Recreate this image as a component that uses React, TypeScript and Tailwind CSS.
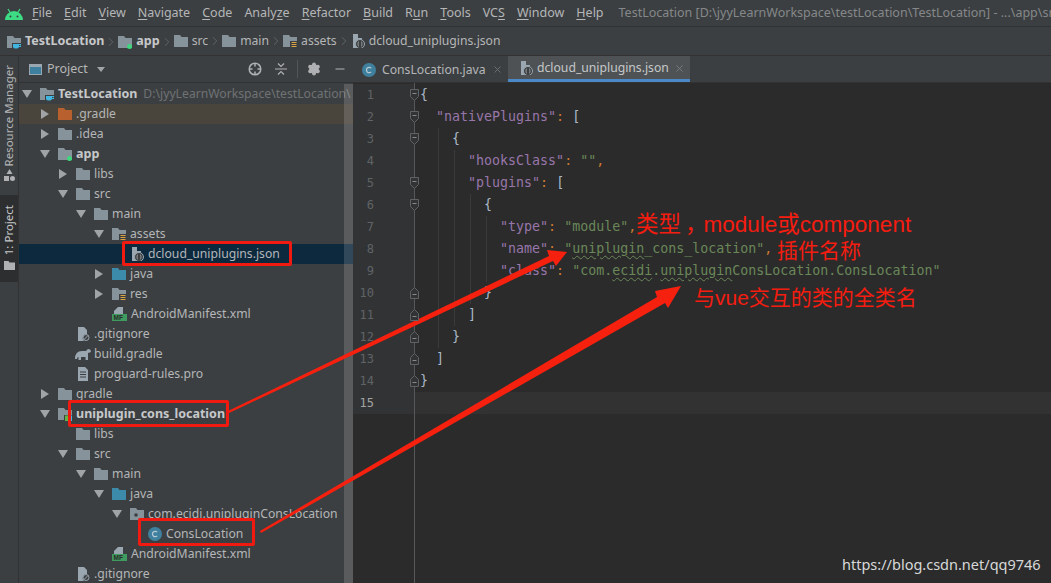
import { ChevronRight, Minus, Settings, X } from "lucide-react";
import type { ReactNode } from "react";

const Folder = ({ color = "#87939a", mark }: { color?: string; mark?: ReactNode }) => (
  <svg width="14" height="14" viewBox="0 0 14 14" className="shrink-0">
    <path d="M0 1h6l1.5 2H14v10H0z" fill={color} />
    {mark}
  </svg>
);

const greenDot = <circle cx="11.5" cy="11.5" r="2.5" fill="#3fd67c" />;
const resLines = (
  <g>
    <rect x="7" y="7" width="7" height="7" fill="#3c3f41" />
    <path d="M8.5 8.5h5M8.5 10.5h5M8.5 12.5h5" stroke="#d9a343" strokeWidth="1" />
  </g>
);
const cup = (
  <g>
    <rect x="5" y="8" width="9" height="6" fill="#3c3f41" />
    <path d="M6 9h6v2.5a2 2 0 0 1-2 2H8a2 2 0 0 1-2-2z" fill="#40b6e0" />
    <path d="M12 9.5h2v2h-2" stroke="#40b6e0" fill="none" />
  </g>
);

const JsonIcon = () => (
  <svg width="14" height="14" viewBox="0 0 14 14" className="shrink-0">
    <path d="M2 0h5v4h4v3H7v7H2z" fill="#9aa7b0" />
    <circle cx="9" cy="10" r="4.5" fill="#3c3f41" stroke="#9aa7b0" strokeWidth="1" />
    <path d="M8 7.5q-1 .2-1 2.5t1 2.5M10 7.5q1 .2 1 2.5t-1 2.5" stroke="#afb1b3" fill="none" strokeWidth=".8" />
  </svg>
);

const ClassIcon = () => (
  <svg width="14" height="14" viewBox="0 0 14 14" className="shrink-0">
    <circle cx="7" cy="7" r="7" fill="#40809f" />
    <path d="M9.2 5.2a2.7 2.7 0 1 0 0 3.6" stroke="#b5c9d4" fill="none" strokeWidth="1.2" />
  </svg>
);

const ManifestIcon = () => (
  <svg width="15" height="14" viewBox="0 0 15 14" className="shrink-0">
    <path d="M6 0h5v7H2V4z" fill="#9aa7b0" />
    <rect x="0" y="7" width="15" height="7" fill="#3f9b5f" />
    <text x="1.5" y="13" fontSize="6.5" fontWeight="700" fill="#2b2b2b" fontFamily="Liberation Sans">MF</text>
  </svg>
);

const GitignoreIcon = () => (
  <svg width="14" height="14" viewBox="0 0 14 14" className="shrink-0">
    <path d="M2 0h6l3 3v4a4 4 0 0 0-3 7H2z" fill="#9aa7b0" />
    <circle cx="10" cy="10.5" r="3" fill="none" stroke="#9aa7b0" />
    <path d="M8 12.5l4-4" stroke="#9aa7b0" />
  </svg>
);

const GradleIcon = () => (
  <svg width="16" height="12" viewBox="0 0 16 12" className="-ml-[1px] -mr-[1px] shrink-0">
    <path d="M0 11q0-8 7-8h4q2-3 4-1.500 1 1 1 2.500l-3 1v7h-2.500V9H6v3H3.500V9Q2 9 2 11z" fill="#9aa7b0" />
  </svg>
);

const TextIcon = () => (
  <svg width="14" height="14" viewBox="0 0 14 14" className="shrink-0">
    <path d="M2 0h7l3 3v11H2z" fill="#9aa7b0" />
    <path d="M4 5h6M4 7.500h6M4 10h6" stroke="#3c3f41" />
  </svg>
);

const ModuleIcon = () => (
  <svg width="14" height="14" viewBox="0 0 14 14" className="shrink-0">
    <path d="M0 1h6l1.5 2H14v10H0z" fill="#87939a" />
    <rect x="6" y="8" width="8" height="6" fill="#3c3f41" />
    <rect x="7" y="8.500" width="3" height="5.500" fill="#62b543" />
    <rect x="11" y="8.500" width="3" height="5.500" fill="#40b6e0" />
  </svg>
);

const PackageIcon = () => (
  <svg width="14" height="14" viewBox="0 0 14 14" className="shrink-0">
    <path d="M0 1h6l1.500 2H14v10H0z" fill="#87939a" />
    <circle cx="6" cy="8" r="1.800" fill="#3c3f41" />
  </svg>
);

type Row = {
  level: number;
  arrow?: "open" | "closed";
  icon: ReactNode;
  label: string;
  bold?: boolean;
  rowCls?: string;
  hint?: string;
};

const tree: Row[] = [
  { level: 0, arrow: "open", icon: <Folder mark={cup} />, label: "TestLocation", bold: true, hint: "D:\\jyyLearnWorkspace\\testLocation\\" },
  { level: 1, arrow: "closed", icon: <Folder color="#b8602e" />, label: ".gradle", rowCls: "bg-[#49453c]" },
  { level: 1, arrow: "closed", icon: <Folder />, label: ".idea" },
  { level: 1, arrow: "open", icon: <Folder mark={greenDot} />, label: "app", bold: true },
  { level: 2, arrow: "closed", icon: <Folder />, label: "libs" },
  { level: 2, arrow: "open", icon: <Folder />, label: "src" },
  { level: 3, arrow: "open", icon: <Folder />, label: "main" },
  { level: 4, arrow: "open", icon: <Folder mark={resLines} />, label: "assets" },
  { level: 5, icon: <JsonIcon />, label: "dcloud_uniplugins.json", rowCls: "bg-[#0d293e]" },
  { level: 4, arrow: "closed", icon: <Folder color="#3d8bab" />, label: "java" },
  { level: 4, arrow: "closed", icon: <Folder mark={resLines} />, label: "res" },
  { level: 4, icon: <ManifestIcon />, label: "AndroidManifest.xml" },
  { level: 2, icon: <GitignoreIcon />, label: ".gitignore" },
  { level: 2, icon: <GradleIcon />, label: "build.gradle" },
  { level: 2, icon: <TextIcon />, label: "proguard-rules.pro" },
  { level: 1, arrow: "closed", icon: <Folder />, label: "gradle" },
  { level: 1, arrow: "open", icon: <ModuleIcon />, label: "uniplugin_cons_location", bold: true },
  { level: 2, icon: <Folder />, label: "libs" },
  { level: 2, arrow: "open", icon: <Folder />, label: "src" },
  { level: 3, arrow: "open", icon: <Folder />, label: "main" },
  { level: 4, arrow: "open", icon: <Folder color="#3d8bab" />, label: "java" },
  { level: 5, arrow: "open", icon: <PackageIcon />, label: "com.ecidi.unipluginConsLocation" },
  { level: 6, icon: <ClassIcon />, label: "ConsLocation" },
  { level: 4, icon: <ManifestIcon />, label: "AndroidManifest.xml" },
  { level: 2, icon: <GitignoreIcon />, label: ".gitignore" },
];

const indents = ["pl-[3px]", "pl-[21px]", "pl-[39px]", "pl-[57px]", "pl-[75px]", "pl-[93px]", "pl-[111px]"];

const TreeRow = ({ row }: { row: Row }) => (
  <div className={`flex h-5 shrink-0 items-center overflow-hidden whitespace-nowrap ${indents[row.level]} ${row.rowCls ?? ""}`}>
    <span className="flex w-[18px] shrink-0 items-center justify-start">
      {row.arrow === "open" && <span className="h-0 w-0 border-x-[5px] border-t-[8px] border-x-transparent border-t-[#a0a4a6]" />}
      {row.arrow === "closed" && <span className="ml-[1px] h-0 w-0 border-y-[5px] border-l-[8px] border-y-transparent border-l-[#a0a4a6]" />}
    </span>
    {row.icon}
    <span className={`ml-1 ${row.bold ? "text-[12.5px] font-bold text-[#c6c8ca]" : "text-[#b4b6b8]"}`}>{row.label}</span>
    {row.hint && <span className="ml-[6px] text-[#6f7274]">{row.hint}</span>}
  </div>
);

const menu: [string, string, string][] = [
  ["", "F", "ile"], ["", "E", "dit"], ["", "V", "iew"], ["", "N", "avigate"], ["", "C", "ode"],
  ["Analy", "z", "e"], ["", "R", "efactor"], ["", "B", "uild"], ["R", "u", "n"], ["", "T", "ools"],
  ["VC", "S", ""], ["", "W", "indow"], ["", "H", "elp"],
];

const Crumb = ({ icon, label, bold, last }: { icon: ReactNode; label: string; bold?: boolean; last?: boolean }) => (
  <div className="flex items-center">
    {icon}
    <span className={`ml-1 ${bold ? "text-[12.5px] font-bold text-[#c6c8ca]" : "text-[#b4b6b8]"}`}>{label}</span>
    {!last && <ChevronRight size={14} strokeWidth={1} className="text-[#7b7e80]" />}
  </div>
);

const K = ({ children }: { children: ReactNode }) => <span className="text-[#9876aa]">{children}</span>;
const S = ({ children }: { children: ReactNode }) => <span className="text-[#6a8759]">{children}</span>;
const P = ({ children }: { children: ReactNode }) => <span className="text-[#cc7832]">{children}</span>;
const Typo = ({ children }: { children: ReactNode }) => (
  <span className="underline decoration-[#6a8759] decoration-wavy decoration-1 underline-offset-2">{children}</span>
);

const code: { fold?: "open" | "close"; text: ReactNode }[] = [
  { fold: "open", text: "{" },
  { fold: "open", text: <>{"  "}<K>"nativePlugins"</K><P>:</P> [</> },
  { fold: "open", text: "    {" },
  { text: <>{"      "}<K>"hooksClass"</K><P>:</P> <S>""</S><P>,</P></> },
  { fold: "open", text: <>{"      "}<K>"plugins"</K><P>:</P> [</> },
  { fold: "open", text: "        {" },
  { text: <>{"          "}<K>"type"</K><P>:</P> <S>"module"</S><P>,</P></> },
  { text: <>{"          "}<K>"name"</K><P>:</P> <S>"<Typo>uniplugin</Typo>_cons_location"</S><P>,</P></> },
  { text: <>{"          "}<K>"class"</K><P>:</P> <S>"com.<Typo>ecidi</Typo>.<Typo>uniplugin</Typo>ConsLocation.ConsLocation"</S></> },
  { fold: "close", text: "        }" },
  { fold: "close", text: "      ]" },
  { fold: "close", text: "    }" },
  { fold: "close", text: "  ]" },
  { fold: "close", text: "}" },
  { text: "" },
];

const FoldMark = ({ dir }: { dir: "open" | "close" }) => (
  <svg width="9" height="12" viewBox="0 0 9 12">
    <path d={dir === "open" ? "M.5.5h8v7l-4 4-4-4z" : "M.5 11.500h8v-7l-4-4-4 4z"} fill="#313335" stroke="#5f6366" />
    <path d={dir === "open" ? "M2.500 4.500h4" : "M2.500 7.500h4"} stroke="#85888a" />
  </svg>
);

export default function App() {
  return (
    <div className="relative flex h-[583px] w-[1051px] flex-col overflow-hidden bg-[#3c3f41] font-['Noto_Sans','Liberation_Sans',sans-serif] text-[12.2px] text-[#b4b6b8]">
      {/* Menu bar */}
      <div className="flex h-[27px] shrink-0 items-center whitespace-nowrap border-b border-[#323232] pl-[4px] pt-[1px] text-[12.5px]">
        <svg width="20" height="12" viewBox="0 0 20 12" className="mr-[8px] shrink-0">
          <path d="M1 12a9 9 0 0 1 18 0z" fill="#3ddc84" />
          <path d="M4 1l2.500 4M16 1l-2.500 4" stroke="#3ddc84" strokeWidth="1.200" />
          <circle cx="6.500" cy="8.500" r="1" fill="#3c3f41" />
          <circle cx="13.500" cy="8.500" r="1" fill="#3c3f41" />
        </svg>
        <div className="flex gap-[12px]">
          {menu.map(([a, u, b]) => (
            <span key={a + u + b}>
              {a}
              <span className="underline underline-offset-2">{u}</span>
              {b}
            </span>
          ))}
        </div>
        <span className="ml-[15px] text-[#85888a]">TestLocation [D:\jyyLearnWorkspace\testLocation\TestLocation] - ...\app\src\main\assets\dcloud_uniplugins.json</span>
      </div>

      {/* Breadcrumb */}
      <div className="flex h-[29px] shrink-0 items-center border-b border-[#323232] pl-[7px] pt-[1px]">
        <Crumb icon={<Folder mark={cup} />} label="TestLocation" bold />
        <Crumb icon={<Folder mark={greenDot} />} label="app" bold />
        <Crumb icon={<Folder />} label="src" />
        <Crumb icon={<Folder />} label="main" />
        <Crumb icon={<Folder mark={resLines} />} label="assets" />
        <Crumb icon={<JsonIcon />} label="dcloud_uniplugins.json" last />
      </div>

      <div className="flex min-h-0 flex-1">
        {/* Tool strip */}
        <div className="flex w-[19px] shrink-0 flex-col items-center border-r border-[#323232] pt-[9px] text-[11.5px]">
          <span className="rotate-180 whitespace-nowrap [writing-mode:vertical-rl]">Resource Manager</span>
          <svg width="11" height="12" viewBox="0 0 11 12" className="mt-[3px]">
            <path d="M5.500 0l3 5h-6z" fill="#afb1b3" />
            <rect x="0" y="7" width="5" height="5" fill="#afb1b3" />
            <circle cx="8.500" cy="9.500" r="2.500" fill="#afb1b3" />
          </svg>
          <div className="mt-[14px] flex h-[87px] w-[18px] flex-col items-center bg-[#2c2e2f] pt-[10px] text-[#c6c8ca]">
            <span className="rotate-180 whitespace-nowrap [writing-mode:vertical-rl]">1: Project</span>
            <svg width="11" height="9" viewBox="0 0 11 9" className="mt-[5px]">
              <path d="M0 0h4.500l1 1.500H11V9H0z" fill="#afb1b3" />
            </svg>
          </div>
        </div>

        {/* Project panel */}
        <div className="relative flex w-[334px] shrink-0 flex-col">
          <div className="flex h-[27px] shrink-0 items-center border-b border-[#323232] pl-[10px]">
            <span className="h-[11px] w-[13px] border-[1.5px] border-t-[3px] border-[#9aa7b0] bg-[#3d7f9f]" />
            <span className="ml-[5px] pt-[1px] text-[12.5px]">Project</span>
            <span className="ml-[9px] h-0 w-0 border-x-[4px] border-t-[5px] border-x-transparent border-t-[#a0a4a6]" />
            <div className="ml-auto flex items-center pr-[6px] text-[#afb1b3]">
              <svg width="14" height="14" viewBox="0 0 14 14">
                <circle cx="7" cy="7" r="5.800" fill="none" stroke="#afb1b3" strokeWidth="1.500" />
                <path d="M7 1v3.500M7 9.500V13M1 7h3.500M9.500 7H13" stroke="#afb1b3" strokeWidth="1.500" />
              </svg>
              <svg width="14" height="14" viewBox="0 0 14 14" className="ml-[12px]">
                <path d="M1 7h12M4 1.500l3 3 3-3M4 12.500l3-3 3 3" stroke="#afb1b3" fill="none" strokeWidth="1.200" />
              </svg>
              <span className="ml-[9px] h-[18px] w-px bg-[#515658]" />
              <Settings size={14} fill="#afb1b3" className="ml-[9px]" />
              <Minus size={14} strokeWidth={2} className="ml-[12px]" />
            </div>
          </div>
          <div className="flex min-h-0 flex-1 flex-col pt-[1px]">
            {tree.map((row, i) => (
              <TreeRow key={i} row={row} />
            ))}
          </div>
          {/* Scrollbar */}
          <div className="absolute bottom-0 right-0 top-[28px] w-[9px] bg-white/15" />
        </div>

        {/* Editor */}
        <div className="flex min-w-0 flex-1 flex-col">
          <div className="flex h-[27px] shrink-0 items-stretch border-b border-[#323232]">
            <div className="flex w-[155px] items-center pl-[9px] pt-[1px]">
              <ClassIcon />
              <span className="ml-[6px] pt-[1px]">ConsLocation.java</span>
              <X size={11} className="ml-[6px] text-[#6f7274]" />
            </div>
            <div className="flex w-[182px] items-center border-b-[3px] border-[#4a88c7] bg-[#4e5254] pl-[11px] pt-[1px]">
              <JsonIcon />
              <span className="ml-[4px] pt-[1px] text-[#c6c8ca]">dcloud_uniplugins.json</span>
              <X size={11} className="ml-[5px] text-[#7b7e80]" />
            </div>
          </div>
          <div className="relative min-h-0 flex-1 bg-[#2b2b2b] pt-[1px] font-['DejaVu_Sans_Mono','Liberation_Mono',monospace] text-[13.3px]">
            {code.map((line, i) => (
              <div key={i} className={`flex h-[22px] items-center ${i === 14 ? "bg-[#323232]" : ""}`}>
                <div className={`relative flex h-[22px] w-[62px] shrink-0 items-center justify-end bg-[#313335] pr-[41px] text-[12px] ${i === 14 ? "text-[#a4a3a3]" : "text-[#606366]"}`}>
                  <span>{i + 1}</span>
                  {line.fold && (
                    <span className="absolute right-[-4px] top-[5px] z-10 flex">
                      <FoldMark dir={line.fold} />
                    </span>
                  )}
                </div>
                <pre className="ml-[5px] font-['DejaVu_Sans_Mono','Liberation_Mono',monospace] text-[#a9b7c6]">{line.text}</pre>
              </div>
            ))}
            {/* Gutter rule and indent guides */}
            <div className="absolute bottom-0 left-[61px] top-0 w-px bg-[#555759]" />
            <div className="absolute left-[85px] top-[45px] h-[220px] w-px bg-[#3b3b3b]" />
            <div className="absolute left-[101px] top-[67px] h-[176px] w-px bg-[#3b3b3b]" />
            <div className="absolute left-[117px] top-[111px] h-[110px] w-px bg-[#3b3b3b]" />
            <div className="absolute left-[133px] top-[133px] h-[66px] w-px bg-[#3b3b3b]" />
          </div>
        </div>
      </div>

      {/* Annotation frames */}
      <div className="absolute left-[122px] top-[241px] h-[25px] w-[170px] rounded-[2px] border-[3px] border-[#f01a10]" />
      <div className="absolute left-[68px] top-[400px] h-[27px] w-[161px] rounded-[2px] border-[3px] border-[#f01a10]" />
      <div className="absolute left-[138px] top-[518px] h-[28px] w-[117px] rounded-[2px] border-[3px] border-[#f01a10]" />

      {/* Arrows */}
      <svg width="1051" height="583" viewBox="0 0 1051 583" className="pointer-events-none absolute left-0 top-0">
        <polygon points="228,411 549,256 547,250 567,252 556,266 553,261 229,413" fill="#f6200f" />
        <polygon points="260,531 657,297 655,291 681,286 668,308 665,303 261,533" fill="#f6200f" />
      </svg>

      {/* Red notes */}
      <span className="absolute left-[636px] top-[213px] whitespace-nowrap font-['Liberation_Sans','Noto_Sans_CJK_SC',sans-serif] text-[22.5px] leading-[24px] text-[#f51c10]">
        类型<span className="ml-[4px] tracking-[-4px]">，</span>module或component
      </span>
      <span className="absolute left-[777px] top-[237px] whitespace-nowrap font-['Noto_Sans_CJK_SC',sans-serif] text-[21px] leading-[24px] text-[#f51c10]">插件名称</span>
      <span className="absolute left-[694px] top-[286px] whitespace-nowrap font-['Liberation_Sans','Noto_Sans_CJK_SC',sans-serif] text-[21px] leading-[24px] text-[#f51c10]">与vue交互的类的全类名</span>

      {/* Watermark */}
      <span className="absolute left-[842px] top-[554px] whitespace-nowrap font-['Noto_Sans',sans-serif] text-[14.5px] leading-[20px] text-[#d7d8d9]">https://blog.csdn.net/qq9746</span>
    </div>
  );
}
